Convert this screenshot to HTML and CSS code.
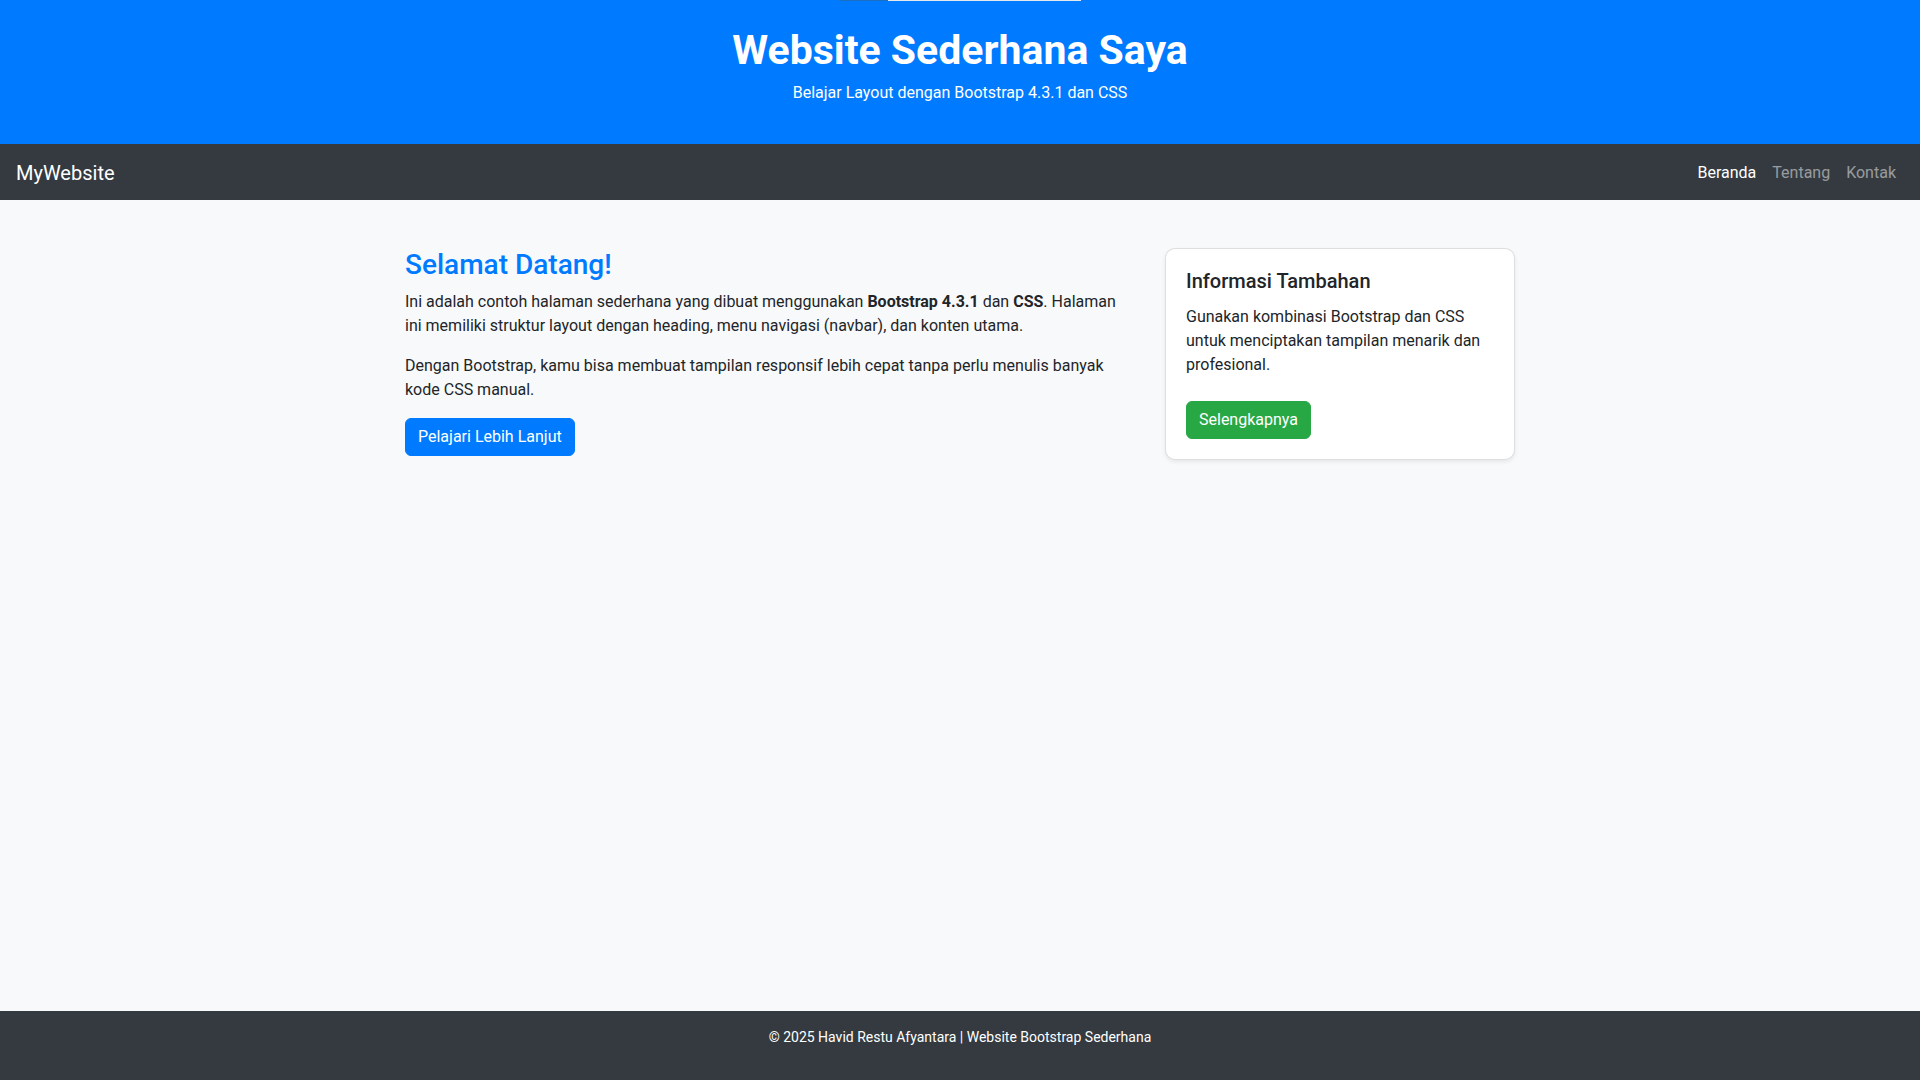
FILE: index.html
```html
<!DOCTYPE html>
<html lang="id">
<head>
<meta charset="utf-8">
<title>Website Sederhana Saya</title>
<link rel="stylesheet" href="styles.css">
</head>
<body>
<div class="top-strip"><span class="strip-dark"></span><span class="strip-light"></span></div>
<header class="site-header">
  <h1 class="site-title">Website Sederhana Saya</h1>
  <p class="site-subtitle">Belajar Layout dengan Bootstrap 4.3.1 dan CSS</p>
</header>
<nav class="navbar">
  <a class="navbar-brand" href="#">MyWebsite</a>
  <ul class="nav-list">
    <li><a class="nav-link active" href="#">Beranda</a></li>
    <li><a class="nav-link" href="#">Tentang</a></li>
    <li><a class="nav-link" href="#">Kontak</a></li>
  </ul>
</nav>
<main class="main">
  <div class="container">
    <div class="col-main">
      <h3 class="welcome">Selamat Datang!</h3>
      <p>Ini adalah contoh halaman sederhana yang dibuat menggunakan <strong>Bootstrap&nbsp;4.3.1</strong> dan <strong>CSS</strong>. Halaman ini memiliki struktur layout dengan heading, menu navigasi (navbar), dan konten utama.</p>
      <p>Dengan Bootstrap, kamu bisa membuat tampilan responsif lebih cepat tanpa perlu menulis banyak kode CSS manual.</p>
      <a class="btn btn-primary" href="#">Pelajari Lebih Lanjut</a>
    </div>
    <div class="col-side">
      <div class="card">
        <h5 class="card-title">Informasi Tambahan</h5>
        <p class="card-text">Gunakan kombinasi Bootstrap dan CSS untuk menciptakan tampilan menarik dan profesional.</p>
        <a class="btn btn-success card-btn" href="#">Selengkapnya</a>
      </div>
    </div>
  </div>
</main>
<footer class="footer">
  <p>&copy; 2025 Havid Restu Afyantara | Website Bootstrap Sederhana</p>
</footer>
</body>
</html>
```
FILE: styles.css
```css
* { box-sizing: border-box; }
html, body { margin: 0; padding: 0; }
body {
  font-family: Roboto, "Liberation Sans", sans-serif;
  font-size: 16px;
  line-height: 1.5;
  color: #212529;
  background: #f8f9fa;
  min-height: 100vh;
  display: flex;
  flex-direction: column;
}
a { text-decoration: none; }

.top-strip {
  position: absolute;
  top: 0;
  left: 840px;
  height: 1px;
  display: flex;
}
.strip-dark { width: 48px; background: #1a6fc0; }
.strip-light { width: 193px; background: #e6e9ec; }

.site-header {
  background: #007bff;
  color: #fff;
  text-align: center;
  padding: 26px 0 39px;
}
.site-title {
  margin: 0 0 6px;
  font-size: 41px;
  font-weight: 700;
  line-height: 1.2;
}
.site-subtitle { margin: 0; font-size: 16px; line-height: 24px; }

.navbar {
  background: #343a40;
  display: flex;
  align-items: center;
  justify-content: space-between;
  padding: 8px 16px;
  height: 56px;
}
.navbar-brand {
  color: #fff;
  font-size: 20px;
  line-height: 30px;
  padding: 6px 0 4px;
}
.nav-list {
  list-style: none;
  margin: 0;
  padding: 0;
  display: flex;
}
.nav-link {
  display: block;
  padding: 9px 8px 7px;
  color: rgba(255, 255, 255, 0.5);
  line-height: 24px;
}
.nav-link.active { color: #fff; }

.main { flex: 1; }
.container {
  width: 1140px;
  margin: 48px auto 0;
  display: flex;
}
.col-main { width: 760px; padding: 0 15px; }
.col-side { width: 380px; padding: 0 15px; }

.welcome {
  margin: 0 0 8px;
  font-size: 28px;
  font-weight: 500;
  line-height: 1.2;
  color: #007bff;
}
p { margin: 0 0 16px; }

.btn {
  display: inline-block;
  padding: 6px 12px;
  border: 1px solid transparent;
  border-radius: 6px;
  font-size: 16px;
  line-height: 24px;
  color: #fff;
}
.btn-primary { background: #007bff; border-color: #007bff; }
.btn-success { background: #28a745; border-color: #28a745; }

.card {
  background: #fff;
  border: 1px solid rgba(0, 0, 0, 0.125);
  border-radius: 10px;
  box-shadow: 0 2px 4px rgba(0, 0, 0, 0.075);
  padding: 20px;
}
.card-title {
  margin: 0 0 12px;
  font-size: 20px;
  font-weight: 500;
  line-height: 1.2;
}
.card-btn { margin-top: 8px; }

.footer {
  background: #343a40;
  color: #fff;
  text-align: center;
  padding: 16px 0;
  font-size: 14px;
  line-height: 21px;
}
```
